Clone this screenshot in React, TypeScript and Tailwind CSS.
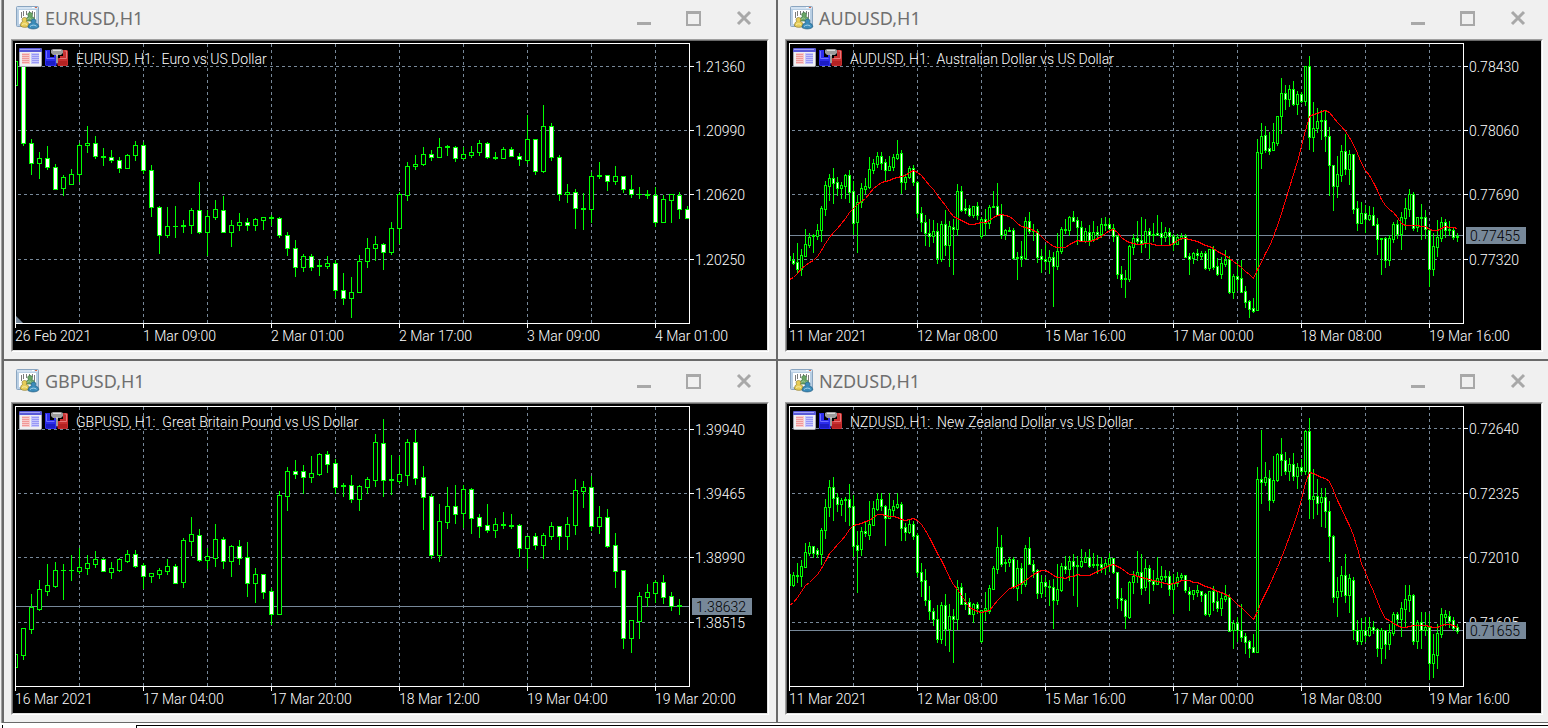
import React from "react";

type Candle = { high: number; open: number; close: number; low: number };

type Chart = {
  symbol: string;
  name: string;
  step: number;
  body: number;
  candles: string;
  average?: string;
  prices: { label: string; y: number }[];
  times: string[];
  current?: { label: string; y: number };
  corner?: boolean;
};

// Plot geometry, in pixels from the window's top left corner.
const PLOT = { left: 15, top: 43, right: 689, bottom: 323 };
const PANEL = { left: 13, top: 41 };
const LIME = "#00ff00";
const SLATE = "#778899";

// Each candle is "high open close low", as a distance down the window.
const EURUSD = `61 85 61 85;60 61 143 145;139 143 163 174;152 163 158 178;146 158 167 169;164 167 189 189;175 188 177 195;169 184 174 184;
143 174 145 181;126 145 143 152;136 143 156 158;148 157 156 165;150 157 160 162;157 160 168 172;154 168 155 168;141 155 145 160;
142 145 170 173;165 170 207 216;206 207 235 253;207 235 226 237;206 226 226 237;220 226 225 232;208 225 210 233;182 210 232 233;
210 232 216 255;200 217 209 219;196 210 232 232;220 232 225 246;213 225 222 230;218 222 225 230;218 225 219 230;217 220 217 229;
215 217 218 225;217 218 235 237;232 235 248 255;240 248 267 276;254 267 256 271;254 256 267 270;260 265 266 275;256 266 263 268;
260 263 290 297;273 290 298 304;277 298 292 317;255 292 261 292;238 261 248 267;236 248 244 260;243 244 252 269;222 252 228 254;
192 228 194 243;162 195 166 200;155 166 164 169;147 164 154 165;150 154 157 160;138 157 147 157;145 147 146 155;146 147 158 161;
147 158 154 159;146 155 152 157;140 152 143 155;142 143 157 158;152 157 158 159;147 158 149 158;147 149 156 156;153 156 159 165;
115 160 139 163;139 139 171 174;105 171 126 172;123 126 157 160;155 157 194 200;184 194 192 202;189 192 208 228;193 208 209 229;
172 209 176 222;162 175 176 178;175 175 181 190;166 181 176 184;176 176 189 192;175 189 194 197;187 194 194 198;190 194 195 198;
187 195 222 226;195 222 199 222;194 200 194 222;192 195 209 218;206 209 218 218`;

const GBPUSD = `291 304 291 304;265 292 265 296;231 266 244 270;217 246 226 247;201 228 222 232;199 223 207 224;201 207 207 236;192 207 207 217;
185 208 204 210;192 205 200 211;188 201 196 204;195 196 208 208;199 209 205 215;195 207 196 208;187 198 191 199;187 191 203 204;
200 202 213 225;210 213 210 219;205 211 207 215;196 208 203 211;201 203 220 220;175 219 177 224;154 178 171 192;166 172 197 198;
185 197 193 205;161 195 176 203;174 176 198 205;182 198 183 213;177 183 195 201;179 194 220 233;205 220 211 239;211 211 229 235;
225 228 251 261;128 251 132 251;104 133 108 147;97 108 111 115;102 108 114 130;93 114 110 119;90 111 91 112;88 91 101 109;
96 100 124 130;120 122 123 133;112 122 136 139;122 136 123 147;114 124 116 130;71 117 79 123;56 80 117 133;92 116 117 131;
93 118 111 120;76 112 79 122;67 79 115 121;103 114 134 166;131 133 192 195;141 192 158 198;124 159 143 165;122 143 151 160;
122 150 126 164;125 126 155 170;151 154 163 174;141 162 167 169;155 167 161 174;149 162 161 165;151 162 163 165;161 162 185 193;
173 185 173 205;170 173 182 186;170 182 172 195;159 173 163 176;163 163 173 186;154 173 161 186;116 162 127 171;118 128 124 144;
113 124 163 167;143 163 154 170;146 154 183 184;170 182 208 224;207 207 275 285;257 275 257 289;229 258 233 275;221 234 229 243;
217 230 219 239;212 219 234 240;229 233 243 247;236 242 243 251`;

const AUDUSD = `256 256 260 260;253 260 263 264;243 262 269 273;249 269 255 275;229 256 244 256;233 245 237 247;234 235 236 252;224 236 230 239;
206 230 208 241;181 209 185 215;174 186 178 200;168 178 183 203;177 182 188 195;182 188 185 198;174 186 175 198;170 175 192 202;
181 191 223 234;195 222 202 252;183 202 188 207;178 189 186 193;157 187 169 188;159 170 163 173;152 164 156 167;152 156 163 169;
159 162 170 181;156 170 166 170;154 167 157 170;140 158 154 159;150 153 182 193;174 182 177 189;166 177 168 178;165 168 182 185;
181 182 213 217;207 213 222 231;215 222 233 245;219 233 236 246;220 236 231 242;223 231 258 263;221 259 224 261;210 224 245 255;
221 245 226 266;219 227 229 274;184 229 191 235;186 191 210 211;199 208 210 213;205 208 215 216;206 215 206 217;202 206 215 219;
217 236 219 238;209 219 223 235;205 223 207 228;191 207 206 207;183 206 215 215;204 214 235 238;229 234 230 239;227 230 231 231;
228 230 258 259;252 257 258 279;241 256 258 266;217 258 221 259;212 221 231 233;224 230 231 240;229 231 257 262;249 256 259 272;
245 259 261 269;250 261 257 273;252 257 266 306;233 266 251 269;227 251 229 253;219 229 230 233;216 230 217 235;211 217 221 221;
217 220 227 244;221 227 241 241;228 241 231 242;225 232 240 245;221 239 232 241;226 232 234 239;218 234 224 237;217 224 225 230;
218 224 228 229;224 228 236 241;235 236 274 278;266 274 279 287;270 278 279 297;245 279 246 281;234 247 238 254;221 238 241 243;
217 240 243 252;219 242 231 247;228 231 235 258;223 234 235 241;215 233 235 235;222 233 237 245;227 237 232 241;228 232 236 244;
234 236 244 250;234 244 237 244;233 238 236 239;234 236 257 257;253 256 259 274;252 258 253 263;249 253 255 260;251 256 253 259;
251 253 268 269;249 268 249 270;246 249 267 269;258 266 274 275;257 274 263 278;250 264 260 266;256 259 292 293;274 292 276 298;
261 276 279 290;260 278 292 292;286 291 302 307;300 301 309 317;298 308 311 312;139 310 152 310;123 153 136 168;126 135 150 152;
132 148 151 154;123 150 142 150;116 143 116 145;78 116 93 133;85 93 99 109;85 99 89 106;81 89 104 105;91 104 94 114;
92 94 101 102;66 101 66 105;56 66 137 149;102 137 128 151;108 128 121 132;110 120 121 139;111 120 136 151;127 136 165 195;
165 165 186 210;156 186 174 197;145 175 151 181;134 151 169 174;150 169 154 184;154 154 209 213;201 208 223 230;202 223 213 223;
205 213 219 232;206 219 215 220;207 215 225 225;218 224 239 254;238 238 239 274;237 238 260 267;235 260 238 265;222 239 224 242;
220 224 234 238;212 234 217 249;198 218 208 229;189 209 194 216;192 194 228 230;217 227 217 231;204 217 218 239;210 217 229 238;
228 230 269 286;233 269 246 275;220 247 237 256;217 238 222 241;219 222 230 237;221 229 230 235;228 230 237 239;233 236 237 241`;

const NZDUSD = `211 222 211 222;209 222 212 223;200 212 213 219;197 213 203 223;180 204 189 204;179 190 183 192;183 183 190 194;185 187 191 194;
165 191 167 201;136 167 144 175;117 144 124 153;114 124 135 157;130 134 141 148;135 141 137 152;134 136 137 158;121 136 144 162;
132 143 183 193;168 182 187 229;164 186 168 192;158 168 170 173;138 172 161 176;138 162 145 162;130 146 136 147;130 136 143 147;
142 143 155 182;130 155 146 155;137 147 143 152;130 144 141 145;139 141 165 177;160 164 169 177;157 169 161 170;158 161 173 176;
170 172 209 213;200 209 218 233;206 217 237 242;223 237 248 256;245 248 256 262;242 256 276 279;239 276 242 280;231 242 266 282;
241 266 253 288;246 253 256 299;217 256 224 266;220 224 241 241;230 239 241 246;235 239 251 251;240 251 241 259;239 241 245 250;
247 278 247 279;229 247 245 257;222 248 225 250;203 226 205 226;164 206 184 210;172 184 201 203;196 199 200 208;194 199 196 203;
194 196 224 225;197 225 205 237;200 205 221 230;182 221 185 223;174 185 201 201;197 201 208 214;206 207 230 235;212 230 219 234;
214 219 223 233;217 223 224 242;216 224 237 265;201 237 226 241;200 227 203 228;193 203 206 210;193 206 198 217;191 198 203 232;
193 202 203 243;186 203 198 204;189 199 194 199;186 194 203 204;190 201 202 204;192 201 202 210;194 201 204 209;196 204 200 211;
190 201 195 208;195 195 209 210;209 209 235 245;225 235 237 247;236 237 253 265;218 254 219 255;208 219 213 230;188 213 209 219;
191 209 225 231;196 224 205 227;202 205 218 240;207 218 221 227;194 221 215 221;203 216 213 224;207 213 214 218;208 213 226 232;
211 226 220 250;209 220 214 223;210 214 212 216;212 212 227 229;224 228 231 247;227 231 227 236;222 229 227 233;228 228 232 238;
230 231 251 252;228 251 228 253;223 228 239 247;228 238 245 248;230 245 235 252;222 236 233 238;231 234 268 268;257 267 260 285;
254 260 267 278;241 267 274 278;270 273 279 290;277 278 285 294;271 284 289 289;104 289 116 289;67 116 119 140;99 119 114 122;
107 115 137 147;93 137 117 139;90 117 91 118;75 91 97 112;89 97 108 111;95 108 101 117;90 101 113 117;100 113 104 125;
96 104 108 111;67 108 68 111;55 68 136 155;106 136 133 155;116 133 140 151;125 139 134 163;125 134 148 164;138 148 173 198;
172 173 234 239;214 234 228 253;203 228 212 233;191 212 232 239;211 232 215 249;214 217 267 276;257 267 278 281;255 278 267 281;
254 267 272 278;254 272 264 273;258 264 267 270;265 266 285 293;265 285 267 300;267 267 281 295;261 281 269 286;249 270 251 272;
249 251 256 261;239 256 245 273;222 246 236 264;222 237 232 248;231 232 278 281;257 278 259 285;249 259 267 285;249 267 264 272;
251 264 300 316;271 300 291 314;261 292 270 305;245 271 251 274;247 254 251 262;248 253 258 264;254 257 265 267;261 264 268 270`;

const AUD_AVERAGE = `279 277 273 268 265 262 260 256 250 243 237 232 228 223 218 212 208 204 201 198 193 188 185 182 181 180 178 177 176 175 172 170
172 175 180 185 189 195 200 205 211 216 218 220 222 224 224 223 222 222 220 217 215 214 215 216 219 223 226 227 228 230 232 236
240 243 246 247 247 247 244 242 240 241 241 241 240 238 236 233 230 229 232 237 240 242 243 244 244 243 243 244 245 245 245 245
243 240 238 238 239 240 241 243 245 246 248 251 253 255 258 261 264 267 271 274 278 269 262 253 246 236 225 213 200 187 174 161
146 130 116 114 113 111 110 112 117 122 126 131 137 144 153 163 170 175 182 190 199 205 209 212 217 223 225 225 225 225 226 226
229 230 230 228 226 227 227 228`;

const NZD_AVERAGE = `242 239 234 228 222 219 215 211 205 198 190 186 181 177 172 166 162 161 160 158 157 154 151 151 152 153 153 154 156 157 156 155
157 161 167 174 182 190 197 205 214 221 226 232 238 244 246 248 249 248 247 242 237 233 229 225 224 222 220 217 214 211 209 207
207 209 212 214 214 215 213 213 211 212 212 212 210 208 206 204 202 201 203 205 208 211 211 213 214 215 216 217 218 219 220 221
220 219 217 217 217 219 219 221 223 224 226 228 229 231 233 237 241 244 248 252 256 248 238 230 222 213 204 194 184 173 162 150
136 120 109 110 112 114 115 118 127 137 145 154 162 172 185 200 209 219 228 238 248 255 257 260 262 264 264 263 262 262 262 262
263 264 264 262 261 261 262 264`;

const CHARTS: Chart[] = [
  {
    symbol: "EURUSD",
    name: "Euro vs US Dollar",
    step: 8,
    body: 5,
    candles: EURUSD,
    prices: [
      { label: "1.21360", y: 66 },
      { label: "1.20990", y: 130 },
      { label: "1.20620", y: 194 },
      { label: "1.20250", y: 259 },
    ],
    times: ["26 Feb 2021", "1 Mar 09:00", "2 Mar 01:00", "2 Mar 17:00", "3 Mar 09:00", "4 Mar 01:00"],
    corner: true,
  },
  {
    symbol: "AUDUSD",
    name: "Australian Dollar vs US Dollar",
    step: 4,
    body: 3,
    candles: AUDUSD,
    average: AUD_AVERAGE,
    prices: [
      { label: "0.78430", y: 66 },
      { label: "0.78060", y: 130 },
      { label: "0.77690", y: 194 },
      { label: "0.77320", y: 259 },
    ],
    times: ["11 Mar 2021", "12 Mar 08:00", "15 Mar 16:00", "17 Mar 00:00", "18 Mar 08:00", "19 Mar 16:00"],
    current: { label: "0.77455", y: 235 },
  },
  {
    symbol: "GBPUSD",
    name: "Great Britain Pound vs US Dollar",
    step: 8,
    body: 5,
    candles: GBPUSD,
    prices: [
      { label: "1.39940", y: 66 },
      { label: "1.39465", y: 130 },
      { label: "1.38990", y: 194 },
      { label: "1.38515", y: 259 },
    ],
    times: ["16 Mar 2021", "17 Mar 04:00", "17 Mar 20:00", "18 Mar 12:00", "19 Mar 04:00", "19 Mar 20:00"],
    current: { label: "1.38632", y: 243 },
  },
  {
    symbol: "NZDUSD",
    name: "New Zealand Dollar vs US Dollar",
    step: 4,
    body: 3,
    candles: NZDUSD,
    average: NZD_AVERAGE,
    prices: [
      { label: "0.72640", y: 65 },
      { label: "0.72325", y: 130 },
      { label: "0.72010", y: 194 },
      { label: "0.71695", y: 259 },
    ],
    times: ["11 Mar 2021", "12 Mar 08:00", "15 Mar 16:00", "17 Mar 00:00", "18 Mar 08:00", "19 Mar 16:00"],
    current: { label: "0.71655", y: 267 },
  },
];

function parseCandles(text: string): Candle[] {
  return text.split(";").map((item) => {
    const [high, open, close, low] = item.trim().split(" ").map(Number);
    return { high, open, close, low };
  });
}

function AppIcon() {
  return (
    <svg width="24" height="24" viewBox="0 0 24 24" aria-hidden="true">
      <rect x="0.5" y="0.5" width="22" height="20" rx="1" fill="#b9cfe4" stroke="#8aa5c0" />
      <rect x="1" y="1" width="21" height="2" fill="#d3e2f1" />
      <rect x="16" y="1" width="2" height="1" fill="#ffffff" />
      <rect x="19" y="1" width="2" height="1" fill="#d9694c" />
      <rect x="3" y="4" width="17" height="14" fill="#ffffff" />
      <path d="M5.500 6v6M7.500 5v5M10.500 5v4M13.500 5v2M16.500 5v3M18.500 6v6" stroke="#7c7c7c" strokeWidth="1" />
      <path d="M14 6.500c1.500 0 2.500 1 2.500 2.200 0 .8-.3 1.300-.8 1.700 2 .6 3.300 2 3.300 4.600h-9c0-2.600 1-4 2.700-4.600-.7-.4-1-1-1-1.700 0-1.200.8-2.200 2.300-2.200z" fill="#6aa565" stroke="#3f7545" strokeWidth="0.7" />
      <path d="M11 13.500l2.500-1.500 2 1.500 2-1.500" stroke="#a9d0a0" strokeWidth="0.8" fill="none" />
      <path d="M8.500 11.500c1.400 0 2.300.9 2.300 2.100 0 .7-.2 1.200-.7 1.600 2 .6 3 2.200 3 4.800-2 1.800-6.600 1.800-8.600 0 0-2.500.8-4.200 2.400-4.800-.5-.4-.8-.9-.8-1.600 0-1.200 1-2.100 2.400-2.100z" fill="#e6cc58" stroke="#8f7d2c" strokeWidth="0.7" />
      <path d="M6 18.500c1.500-1 3.500-1 5 0" stroke="#fbf0a8" strokeWidth="1" fill="none" />
      <path d="M17.500 13c1.500 0 2.400.9 2.400 2.100 0 .7-.3 1.200-.7 1.600 2.200.6 3.600 2 3.600 4.300-2 2.300-8 2.600-10.800.5 0-2.600 1.500-4.300 3.800-4.800-.5-.4-.7-.9-.7-1.600 0-1.200.9-2.100 2.400-2.100z" fill="#3b8cba" stroke="#1f5a7e" strokeWidth="0.7" />
      <path d="M14 20.500c2-1.800 4.500-1.800 6.500-.3" stroke="#a6d4ec" strokeWidth="1" fill="none" />
    </svg>
  );
}

function ListIcon() {
  return (
    <g transform="translate(19 47)">
      <rect x="0.5" y="1.500" width="22" height="18" rx="1" fill="#efeff2" stroke="#a6a6ae" />
      <path d="M0 2l1-1h21l1 1v3H0z" fill="#5a5ad8" />
      <rect x="1" y="2" width="20" height="1" fill="#a4a4f4" />
      <rect x="3" y="6" width="8" height="11" fill="#f9caca" />
      <rect x="12" y="6" width="8" height="11" fill="#c6c6fc" />
      <path d="M3 7.500h7M3 9.500h7M3 11.500h7M3 13.500h7M3 15.500h7" stroke="#f09898" />
      <path d="M13 7.500h7M13 9.500h7M13 11.500h7M13 13.500h7M13 15.500h7" stroke="#9898f6" />
    </g>
  );
}

function TradeIcon() {
  return (
    <g transform="translate(45 48)">
      <path d="M0 2h5v7h4v-3h3v9l-1 3H1l-1-1z" fill="#2c2cec" />
      <path d="M1.500 3v7.500h8" fill="none" stroke="#7070ff" />
      <path d="M1 13h9v4H1z" fill="#1c1cc4" />
      <path d="M18 2h4l1 1v14l-1 1h-9l-1-3v-5h3V8h3z" fill="#c83030" />
      <path d="M19.500 3h2v7.500h-7" fill="none" stroke="#e87878" />
      <path d="M13 13h9v4h-9z" fill="#b42222" />
      <path d="M6 2l2-1h8l2 1v3l-2 2h-3v8h-2V7H8L6 5z" fill="#9c9c9c" />
      <path d="M8 2.500h8M12 6v2" stroke="#dcdcdc" />
    </g>
  );
}

function PriceChart({ chart }: { chart: Chart }) {
  const half = (chart.body - 1) / 2;
  const columns = Array.from({ length: 10 }, (_, i) => PLOT.left + 64 * (i + 1));
  const clip = `plot-${chart.symbol}`;
  const average = chart.average
    ?.trim()
    .split(/\s+/)
    .map((y, i) => `${PLOT.left + i * chart.step + 0.5},${Number(y) + 0.5}`)
    .join(" ");

  return (
    <svg
      role="img"
      aria-label={`${chart.symbol} price chart`}
      className="block h-[309px] w-full bg-black font-['Roboto','Noto_Sans',sans-serif] text-sm font-light"
    >
      <defs>
        <clipPath id={clip}>
          <rect x={PLOT.left} y={PLOT.top} width={PLOT.right - PLOT.left} height={PLOT.bottom - PLOT.top} />
        </clipPath>
      </defs>
      <g transform={`translate(${-PANEL.left} ${-PANEL.top})`}>
        <g stroke={SLATE} strokeDasharray="3 3" shapeRendering="crispEdges">
          {columns.map((x) => (
            <line key={x} x1={x + 0.5} x2={x + 0.5} y1={PLOT.top + 1} y2={PLOT.bottom} />
          ))}
          {chart.prices.map(({ y }) => (
            <line key={y} x1={PLOT.left} x2={PLOT.right} y1={y + 0.5} y2={y + 0.5} strokeDashoffset="3" />
          ))}
        </g>
        {chart.corner && <path d="M16 316l7 7h-7z" fill={SLATE} />}
        {chart.current && (
          <rect x={PLOT.left} y={chart.current.y} width={PLOT.right - PLOT.left} height="1" fill={SLATE} />
        )}
        <g clipPath={`url(#${clip})`} shapeRendering="crispEdges">
          {parseCandles(chart.candles).map(({ high, open, close, low }, i) => {
            const x = PLOT.left + i * chart.step;
            const top = Math.min(open, close);
            const height = Math.abs(open - close) + 1;
            return (
              <g key={i}>
                <rect x={x} y={high} width="1" height={low - high + 1} fill={LIME} />
                <rect x={x - half} y={top} width={chart.body} height={height} fill={LIME} />
                {height > 2 && (
                  <rect
                    x={x - half + 1}
                    y={top + 1}
                    width={chart.body - 2}
                    height={height - 2}
                    fill={close > open ? "#ffffff" : "#000000"}
                  />
                )}
              </g>
            );
          })}
          {average && <polyline points={average} fill="none" stroke="#ff0000" />}
        </g>
        <g fill="#ffffff">
          <rect x={PLOT.left} y={PLOT.top} width={PLOT.right - PLOT.left + 1} height="1" />
          <rect x={PLOT.left} y={PLOT.bottom} width={PLOT.right - PLOT.left + 1} height="1" />
          <rect x={PLOT.left} y={PLOT.top} width="1" height={PLOT.bottom - PLOT.top} />
          <rect x={PLOT.right} y={PLOT.top} width="1" height={PLOT.bottom - PLOT.top} />
          {chart.prices.map(({ label, y }) => (
            <g key={label}>
              <rect x={PLOT.right + 1} y={y} width="4" height="1" />
              <text x={PLOT.right + 6} y={y + 6}>
                {label}
              </text>
            </g>
          ))}
          {chart.times.map((label, i) => (
            <g key={label}>
              <rect x={PLOT.left + 128 * i} y={PLOT.bottom + 1} width="1" height="4" />
              <text x={PLOT.left + 128 * i} y={PLOT.bottom + 18}>
                {label}
              </text>
            </g>
          ))}
          <text x="76" y="64" className="whitespace-pre">
            {`${chart.symbol}, H1:  ${chart.name}`}
          </text>
        </g>
        {chart.current && (
          <>
            <rect x={PLOT.right + 3} y={chart.current.y - 8} width="60" height="17" fill={SLATE} />
            <text x={PLOT.right + 7} y={chart.current.y + 6} fill="#000000">
              {chart.current.label}
            </text>
          </>
        )}
        <ListIcon />
        <TradeIcon />
      </g>
    </svg>
  );
}

function WindowButton({ label, children }: { label: string; children: React.ReactNode }) {
  return (
    <button type="button" aria-label={label} className="flex h-7 w-[50px] items-center justify-center">
      <svg width="16" height="16" viewBox="0 0 16 16" fill="none" stroke="#a8a8a8" aria-hidden="true">
        {children}
      </svg>
    </button>
  );
}

function ChartWindow({ chart, second }: { chart: Chart; second: boolean }) {
  return (
    <section
      className={
        second
          ? "min-w-0 border-l-2 border-[#696969] pr-[5px] pb-[7px] pl-[7px]"
          : "min-w-0 px-[7px] pb-[7px]"
      }
    >
      <header className="flex h-[41px] items-center pb-0.5 pl-[5px]">
        <AppIcon />
        <h2 className="ml-[5px] flex-1 font-['Noto_Sans',sans-serif] text-[18px] leading-6 text-[#6f6f6f]">
          {chart.symbol},H1
        </h2>
        <WindowButton label="Minimize">
          <path d="M1 13.500h14" strokeWidth="3" />
        </WindowButton>
        <WindowButton label="Maximize">
          <path d="M1 2h13v13H1z" strokeWidth="2" />
          <path d="M1 3.500h13" />
        </WindowButton>
        <WindowButton label="Close">
          <path d="M2 2l12 12M14 2L2 14" strokeWidth="3" />
        </WindowButton>
      </header>
      <div className="border border-t-[#a0a0a0] border-r-white border-b-white border-l-[#a0a0a0]">
        <div className="border border-t-[#696969] border-r-[#e3e3e3] border-b-[#e3e3e3] border-l-[#696969]">
          <PriceChart chart={chart} />
        </div>
      </div>
    </section>
  );
}

export default function App() {
  return (
    <main className="min-h-screen overflow-hidden bg-white">
      <div className="flex bg-[#f0f0f0] pl-px">
        <div className="w-[3px] shrink-0 border-r-2 border-l border-r-[#696969] border-l-[#a0a0a0]" />
        <div className="min-w-0 flex-1">
          <div className="-mt-0.5 grid grid-cols-2 border-b-2 border-[#696969]">
            <ChartWindow chart={CHARTS[0]} second={false} />
            <ChartWindow chart={CHARTS[1]} second />
          </div>
          <div className="grid grid-cols-2 border-b border-[#696969]">
            <ChartWindow chart={CHARTS[2]} second={false} />
            <ChartWindow chart={CHARTS[3]} second />
          </div>
        </div>
      </div>
      <div className="flex h-[5px] pt-0.5">
        <div className="ml-0.5 w-[134px] border-l border-black" />
        <div className="flex-1 border-t border-l border-black" />
      </div>
    </main>
  );
}
